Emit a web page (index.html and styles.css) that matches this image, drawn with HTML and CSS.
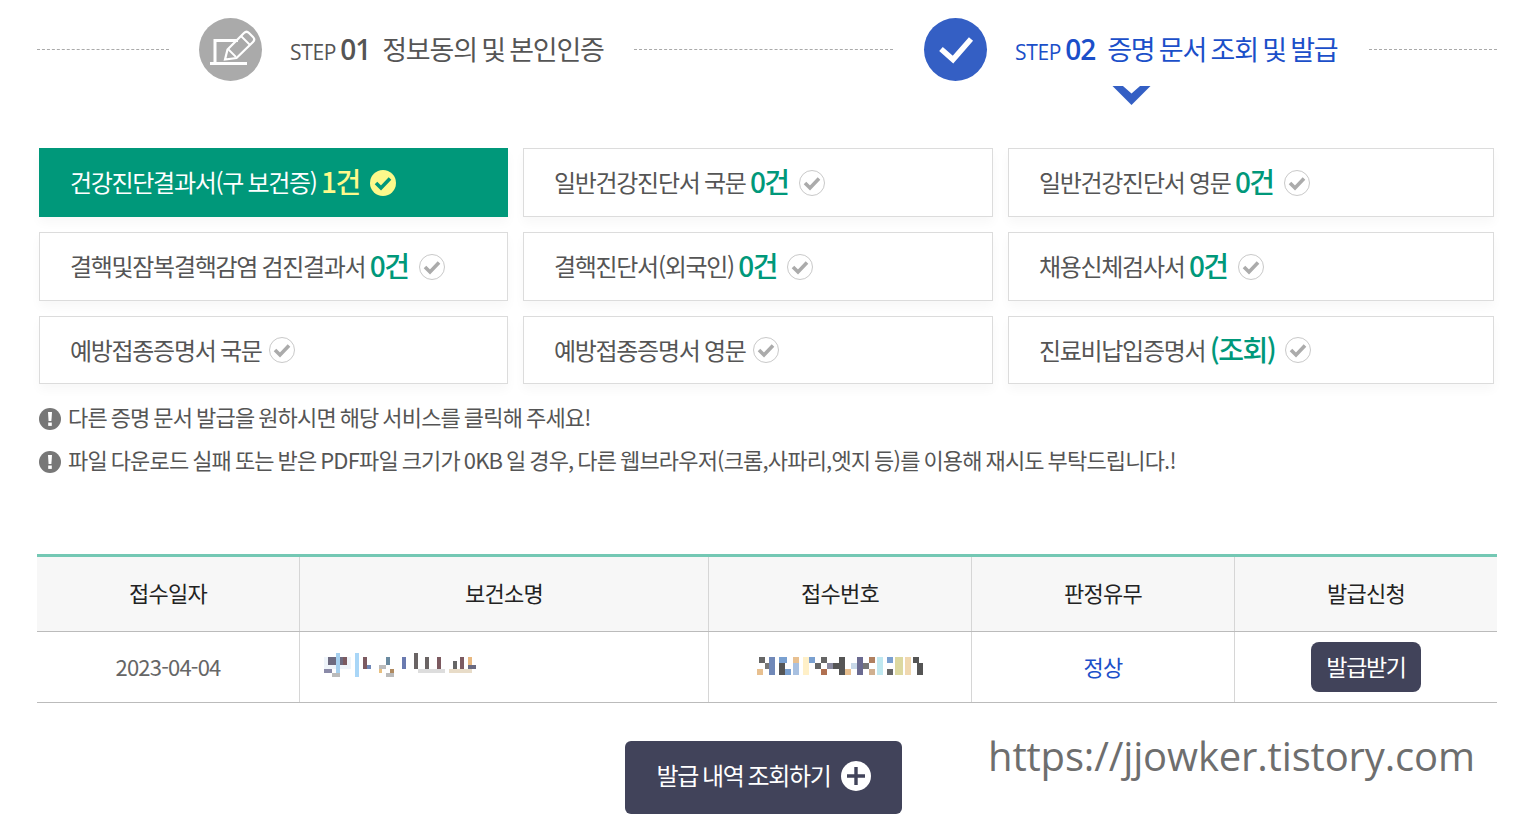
FILE: index.html
```html
<!DOCTYPE html>
<html lang="ko">
<head>
<meta charset="utf-8">
<title>증명 문서 조회 및 발급</title>
<link rel="stylesheet" href="styles.css">
</head>
<body>
<div class="page">
  <div class="steps">
    <span class="dots d1"></span>
    <span class="circle grey">
      <svg width="63" height="63" viewBox="0 0 63 63"><path d="M39 22.500H16V44" fill="none" stroke="#fff" stroke-width="3"/><path d="M11 45.500H48" stroke="#fff" stroke-width="3"/><path d="M26 41.500l2.500-10L45 15q2.500-2.500 5 0l4 4q2.500 2.500 0 5L37.500 40z" fill="none" stroke="#fff" stroke-width="2.200"/><path d="M42 18l9 9M29 31l8 8" stroke="#fff" stroke-width="1.800"/></svg>
    </span>
    <div class="step-text s1"><span class="lab">STEP</span> <span class="num">01</span><span class="tit">정보동의 및 본인인증</span></div>
    <span class="dots d2"></span>
    <span class="circle blue">
      <svg width="63" height="63" viewBox="0 0 63 63"><path d="M17 31l12 10.500L47 21" fill="none" stroke="#fff" stroke-width="5.500"/></svg>
    </span>
    <div class="step-text s2"><span class="lab">STEP</span> <span class="num">02</span><span class="tit">증명 문서 조회 및 발급</span>
      <svg class="caret" width="39" height="19" viewBox="0 0 40 20"><path d="M0 0h11l9 8 9-8h11L20 20z" fill="#345fc4"/></svg>
    </div>
    <span class="dots d3"></span>
  </div>

  <div class="cards">
    <a class="card on"><span>건강진단결과서(구 보건증) </span><b>1건</b><svg class="chk" width="28" height="28" viewBox="0 0 28 28"><circle cx="14" cy="14" r="13" fill="#fdf98b"/><path d="M7 14l5 5 9-9.500" fill="none" stroke="#00987a" stroke-width="3.600"/></svg></a>
    <a class="card"><span>일반건강진단서 국문 </span><b>0건</b><svg class="chk" width="28" height="28" viewBox="0 0 28 28"><circle cx="14" cy="14" r="12.500" fill="#fff" stroke="#c9c9c9"/><path d="M7 14l5 5 9-9.500" fill="none" stroke="#ababab" stroke-width="3.600"/></svg></a>
    <a class="card"><span>일반건강진단서 영문 </span><b>0건</b><svg class="chk" width="28" height="28" viewBox="0 0 28 28"><circle cx="14" cy="14" r="12.500" fill="#fff" stroke="#c9c9c9"/><path d="M7 14l5 5 9-9.500" fill="none" stroke="#ababab" stroke-width="3.600"/></svg></a>
    <a class="card"><span>결핵및잠복결핵감염 검진결과서 </span><b>0건</b><svg class="chk" width="28" height="28" viewBox="0 0 28 28"><circle cx="14" cy="14" r="12.500" fill="#fff" stroke="#c9c9c9"/><path d="M7 14l5 5 9-9.500" fill="none" stroke="#ababab" stroke-width="3.600"/></svg></a>
    <a class="card"><span>결핵진단서(외국인) </span><b>0건</b><svg class="chk" width="28" height="28" viewBox="0 0 28 28"><circle cx="14" cy="14" r="12.500" fill="#fff" stroke="#c9c9c9"/><path d="M7 14l5 5 9-9.500" fill="none" stroke="#ababab" stroke-width="3.600"/></svg></a>
    <a class="card"><span>채용신체검사서 </span><b>0건</b><svg class="chk" width="28" height="28" viewBox="0 0 28 28"><circle cx="14" cy="14" r="12.500" fill="#fff" stroke="#c9c9c9"/><path d="M7 14l5 5 9-9.500" fill="none" stroke="#ababab" stroke-width="3.600"/></svg></a>
    <a class="card plain"><span>예방접종증명서 국문</span><svg class="chk" width="28" height="28" viewBox="0 0 28 28"><circle cx="14" cy="14" r="12.500" fill="#fff" stroke="#c9c9c9"/><path d="M7 14l5 5 9-9.500" fill="none" stroke="#ababab" stroke-width="3.600"/></svg></a>
    <a class="card plain"><span>예방접종증명서 영문</span><svg class="chk" width="28" height="28" viewBox="0 0 28 28"><circle cx="14" cy="14" r="12.500" fill="#fff" stroke="#c9c9c9"/><path d="M7 14l5 5 9-9.500" fill="none" stroke="#ababab" stroke-width="3.600"/></svg></a>
    <a class="card query"><span>진료비납입증명서 </span><b>(조회)</b><svg class="chk" width="28" height="28" viewBox="0 0 28 28"><circle cx="14" cy="14" r="12.500" fill="#fff" stroke="#c9c9c9"/><path d="M7 14l5 5 9-9.500" fill="none" stroke="#ababab" stroke-width="3.600"/></svg></a>
  </div>

  <ul class="notes">
    <li><svg class="ex" width="22" height="22" viewBox="0 0 22 22"><circle cx="11" cy="11" r="11" fill="#777"/><path d="M9 4h4l-.6 9H9.600z" fill="#fff"/><rect x="9.200" y="14.500" width="3.600" height="3.400" fill="#fff"/></svg>다른 증명 문서 발급을 원하시면 해당 서비스를 클릭해 주세요!</li>
    <li><svg class="ex" width="22" height="22" viewBox="0 0 22 22"><circle cx="11" cy="11" r="11" fill="#777"/><path d="M9 4h4l-.6 9H9.600z" fill="#fff"/><rect x="9.200" y="14.500" width="3.600" height="3.400" fill="#fff"/></svg>파일 다운로드 실패 또는 받은 PDF파일 크기가 0KB 일 경우, 다른 웹브라우저(크롬,사파리,엣지 등)를 이용해 재시도 부탁드립니다.!</li>
  </ul>

  <div class="table">
    <div class="row head">
      <div class="cell">접수일자</div><div class="cell">보건소명</div><div class="cell">접수번호</div><div class="cell">판정유무</div><div class="cell">발급신청</div>
    </div>
    <div class="row body">
      <div class="cell date">2023-04-04</div>
      <div class="cell mosaic-cell">
        <svg class="mosaic m1" width="152" height="24" viewBox="0 0 156 24" preserveAspectRatio="none" shape-rendering="crispEdges">
          <rect x="0" y="4" width="28" height="12" fill="#eef4fa"/><rect x="4" y="4" width="16" height="8" fill="#6d6a80"/><rect x="12" y="0" width="4" height="20" fill="#a5cfee"/><rect x="20" y="4" width="4" height="8" fill="#7c5a60"/><rect x="0" y="16" width="8" height="4" fill="#8a8aa8"/><rect x="8" y="20" width="8" height="4" fill="#bbb"/>
          <rect x="32" y="0" width="4" height="24" fill="#a9d6f7"/><rect x="40" y="4" width="4" height="12" fill="#7c5a60"/><rect x="44" y="12" width="4" height="4" fill="#7088b8"/>
          <rect x="56" y="12" width="8" height="4" fill="#bbb"/><rect x="64" y="4" width="4" height="8" fill="#6a8aa0"/><rect x="56" y="16" width="4" height="4" fill="#e8c080"/><rect x="68" y="16" width="4" height="4" fill="#b08a60"/><rect x="64" y="20" width="8" height="4" fill="#bbb"/>
          <rect x="80" y="4" width="4" height="12" fill="#6a7ab0"/><rect x="92" y="0" width="4" height="16" fill="#6a6464"/><rect x="104" y="4" width="4" height="12" fill="#6a6464"/><rect x="116" y="4" width="4" height="12" fill="#7c5a60"/><rect x="96" y="16" width="28" height="4" fill="#ddd"/>
          <rect x="132" y="8" width="4" height="8" fill="#666"/><rect x="140" y="4" width="4" height="12" fill="#7c5a60"/><rect x="148" y="4" width="4" height="8" fill="#e8b880"/><rect x="148" y="12" width="8" height="4" fill="#6a6a80"/><rect x="128" y="16" width="24" height="4" fill="#e8dcc8"/>
        </svg>
      </div>
      <div class="cell mosaic-cell center">
        <svg class="mosaic m2" width="166" height="18" viewBox="0 0 166 18" shape-rendering="crispEdges">
          <rect x="2" y="0" width="6" height="6" fill="#666"/><rect x="8" y="6" width="4" height="6" fill="#777"/><rect x="0" y="12" width="6" height="6" fill="#e8c090"/><rect x="12" y="0" width="6" height="18" fill="#7088b8"/>
          <rect x="22" y="0" width="8" height="6" fill="#7aa0d0"/><rect x="22" y="6" width="6" height="12" fill="#555"/><rect x="28" y="12" width="6" height="6" fill="#7aa0d0"/><rect x="36" y="0" width="6" height="6" fill="#e8c090"/><rect x="36" y="6" width="6" height="12" fill="#a8c0e0"/>
          <rect x="46" y="0" width="6" height="18" fill="#fff0c8"/><rect x="52" y="0" width="6" height="6" fill="#7aa0d0"/><rect x="58" y="6" width="6" height="6" fill="#666"/><rect x="64" y="0" width="6" height="6" fill="#666"/><rect x="64" y="12" width="6" height="6" fill="#b07050"/>
          <rect x="70" y="6" width="6" height="6" fill="#8a8aa0"/><rect x="76" y="6" width="12" height="6" fill="#555"/><rect x="82" y="0" width="6" height="18" fill="#555"/><rect x="88" y="12" width="6" height="6" fill="#e8c090"/><rect x="94" y="6" width="6" height="6" fill="#c8d8e8"/>
          <rect x="100" y="0" width="6" height="18" fill="#6a6a90"/><rect x="106" y="6" width="6" height="6" fill="#777"/><rect x="112" y="0" width="6" height="6" fill="#b08060"/><rect x="112" y="12" width="6" height="6" fill="#d0b090"/>
          <rect x="120" y="0" width="6" height="18" fill="#bfe8f0"/><rect x="130" y="0" width="6" height="6" fill="#7aa0d0"/><rect x="130" y="12" width="6" height="6" fill="#666"/><rect x="138" y="0" width="8" height="18" fill="#dcd8a0"/><rect x="148" y="0" width="6" height="18" fill="#f0d8b0"/><rect x="156" y="0" width="6" height="6" fill="#555"/><rect x="160" y="6" width="6" height="12" fill="#555"/>
        </svg>
      </div>
      <div class="cell ok">정상</div>
      <div class="cell"><a class="issue">발급받기</a></div>
    </div>
  </div>

  <div class="more-wrap">
    <a class="more"><span>발급 내역 조회하기</span><svg width="30" height="30" viewBox="0 0 30 30"><circle cx="15" cy="15" r="15" fill="#fff"/><path d="M15 6v18M6 15h18" stroke="#41435a" stroke-width="3.400"/></svg></a>
  </div>
  <div class="watermark">https://jjowker.tistory.com</div>
</div>
</body>
</html>
```
FILE: styles.css
```css
* { box-sizing: border-box; }
html, body { margin: 0; padding: 0; background: #fff; }
body { font-family: "Noto Sans CJK KR", "Noto Sans", sans-serif; color: #555; overflow: hidden; }
.page { position: relative; width: 1516px; height: 830px; padding: 18px 19px 0 37px; }

.steps { display: flex; align-items: center; height: 63px; }
.dots { height: 0; border-top: 1px dashed #aaa; }
.d1 { width: 132px; margin-right: 30px; }
.d2 { width: 259px; margin-right: 31px; }
.d3 { width: 128px; margin-left: 31px; }
.circle { width: 63px; height: 63px; border-radius: 50%; flex: none; display: block; }
.circle svg { display: block; }
.grey { background: #aaa; }
.blue { background: #345fc4; }
.step-text { position: relative; display: flex; align-items: baseline; margin: -2px 0 0 28px; white-space: nowrap; color: #555; }
.s1 { width: 315px; margin-right: 29px; }
.s2 { width: 323px; color: #1b4fc9; }
.lab { font-family: "Open Sans", sans-serif; font-size: 21px; letter-spacing: -0.3px; margin-right: 4px; }
.num { font-family: "Open Sans", sans-serif; font-size: 28px; font-weight: 600; letter-spacing: -1px; margin-right: 12px; }
.tit { font-size: 27px; letter-spacing: -1.2px; word-spacing: -2px; }
.caret { position: absolute; left: 97px; top: 57px; }

.cards { display: grid; grid-template-columns: 469px 470px 486px; grid-template-rows: 69px 69px 68px; gap: 15px; margin: 67px 0 0 2px; }
.card { display: flex; align-items: center; padding-left: 30px; background: #fff; border: 1px solid #dcdcdc; box-shadow: 0 6px 10px rgba(0,0,0,.03); font-size: 24px; letter-spacing: -1.3px; word-spacing: -1px; color: #555; white-space: pre; }
.card span { margin-bottom: 2px; }
.card b { font-size: 28px; font-weight: 500; color: #00987a; letter-spacing: -1.5px; margin-bottom: 4px; }
.card .chk { margin-left: 9px; flex: none; }
.card.plain .chk { margin-left: 7px; }
.card.query b { letter-spacing: -1.5px; margin-bottom: 2px; }
.card.on { background: #00987a; border-color: #00987a; color: #fff; }
.card.on b { color: #fdf98b; }

.notes { list-style: none; margin: 10px 0 0 2px; padding: 0; }
.notes li { display: flex; align-items: center; height: 43px; font-size: 22px; letter-spacing: -0.82px; word-spacing: -1.5px; color: #555; white-space: nowrap; }
.ex { margin: 6px 7px 0 0; flex: none; }

.table { width: 1460px; margin-top: 74px; border-top: 3px solid #74c8b4; border-bottom: 1px solid #bbb; }
.row { display: grid; grid-template-columns: 263px 409px 263px 263px 262px; }
.head { height: 75px; background: #f7f7f7; border-bottom: 1px solid #bbb; color: #222; }
.head .cell { padding-bottom: 4px; letter-spacing: -0.8px; }
.body { height: 70px; }
.cell { display: flex; align-items: center; justify-content: center; font-size: 22px; letter-spacing: -0.8px; border-right: 1px solid #d6d6d6; }
.cell:last-child { border-right: 0; }
.date { color: #666; padding-bottom: 2px; }
.mosaic-cell { justify-content: flex-start; padding-left: 24px; }
.center { justify-content: center; padding-left: 0; }
.mosaic { display: block; }
.m1 { margin-top: -4px; }
.m2 { margin-top: -2px; }
.ok { color: #1b4fc9; padding-bottom: 2px; }
.issue { display: flex; align-items: center; justify-content: center; width: 110px; height: 50px; padding-bottom: 2px; border-radius: 8px; background: #41435a; color: #fff; font-size: 23px; letter-spacing: -1.3px; }

.more-wrap { display: flex; margin: 38px 0 0 588px; }
.more { display: flex; align-items: center; justify-content: center; gap: 10px; width: 277px; height: 73px; border-radius: 6px; background: #41435a; color: #fff; font-size: 24px; letter-spacing: -1.3px; word-spacing: -1.5px; }
.more span { margin-bottom: 6px; }
.more svg { margin-bottom: 3px; }
.watermark { position: absolute; left: 988px; top: 728px; font-family: "Open Sans", sans-serif; font-size: 40px; letter-spacing: -0.15px; line-height: 56px; color: #6e6e6e; white-space: nowrap; }
```
